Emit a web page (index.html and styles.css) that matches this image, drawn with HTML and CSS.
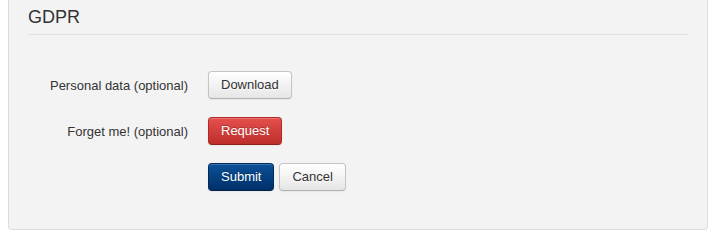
FILE: index.html
```html
<!DOCTYPE html>
<html>
<head>
<meta charset="utf-8">
<link rel="stylesheet" href="styles.css">
</head>
<body>
<div class="panel">
  <form class="form">
    <div class="legend">GDPR</div>
    <div class="group">
      <label class="label">Personal data (optional)</label>
      <div class="controls"><button type="button" class="btn">Download</button></div>
    </div>
    <div class="group">
      <label class="label">Forget me! (optional)</label>
      <div class="controls"><button type="button" class="btn btn-danger">Request</button></div>
    </div>
    <div class="group actions">
      <div class="controls">
        <button type="button" class="btn btn-primary">Submit</button>
        <button type="button" class="btn">Cancel</button>
      </div>
    </div>
  </form>
</div>
</body>
</html>
```
FILE: styles.css
```css
html, body {
  margin: 0;
  padding: 0;
  background: #ffffff;
}
body {
  padding: 0 9px 0 8px;
  font-family: "Liberation Sans", Arial, sans-serif;
  font-size: 13px;
  color: #333333;
}
.panel {
  background: #f3f3f3;
  border: 1px solid #dcdcdc;
  border-top: 0;
  border-radius: 0 0 4px 4px;
  padding: 0 19px 38px 19px;
}
.legend {
  font-size: 18px;
  line-height: 34px;
  color: #333333;
  border-bottom: 1px solid #e0e0e0;
  margin-bottom: 36px;
}
.group {
  display: flex;
  align-items: center;
  margin-bottom: 18px;
}
.group.actions {
  margin-bottom: 0;
}
.label {
  width: 160px;
  text-align: right;
  margin-right: 20px;
  color: #333333;
}
.actions .controls {
  margin-left: 180px;
}
.controls {
  display: flex;
  gap: 5px;
}
.btn {
  font-family: "Liberation Sans", Arial, sans-serif;
  font-size: 13px;
  line-height: 18px;
  padding: 4px 12px;
  margin: 0;
  color: #333333;
  text-shadow: 0 1px 1px rgba(255,255,255,0.75);
  background: linear-gradient(#ffffff, #e6e6e6);
  border: 1px solid #c4c4c4;
  border-bottom-color: #b0b0b0;
  border-radius: 4px;
  box-shadow: inset 0 1px 0 rgba(255,255,255,0.2), 0 1px 2px rgba(0,0,0,0.05);
  cursor: pointer;
}
.btn-danger {
  color: #ffffff;
  text-shadow: 0 -1px 0 rgba(0,0,0,0.25);
  background: linear-gradient(#e5504d, #bd2e2a);
  border-color: #b22a26;
  border-bottom-color: #8f1f1c;
}
.btn-primary {
  color: #ffffff;
  text-shadow: 0 -1px 0 rgba(0,0,0,0.25);
  background: linear-gradient(#0b5199, #003068);
  border-color: #002a5c;
  border-bottom-color: #001f45;
}
```
